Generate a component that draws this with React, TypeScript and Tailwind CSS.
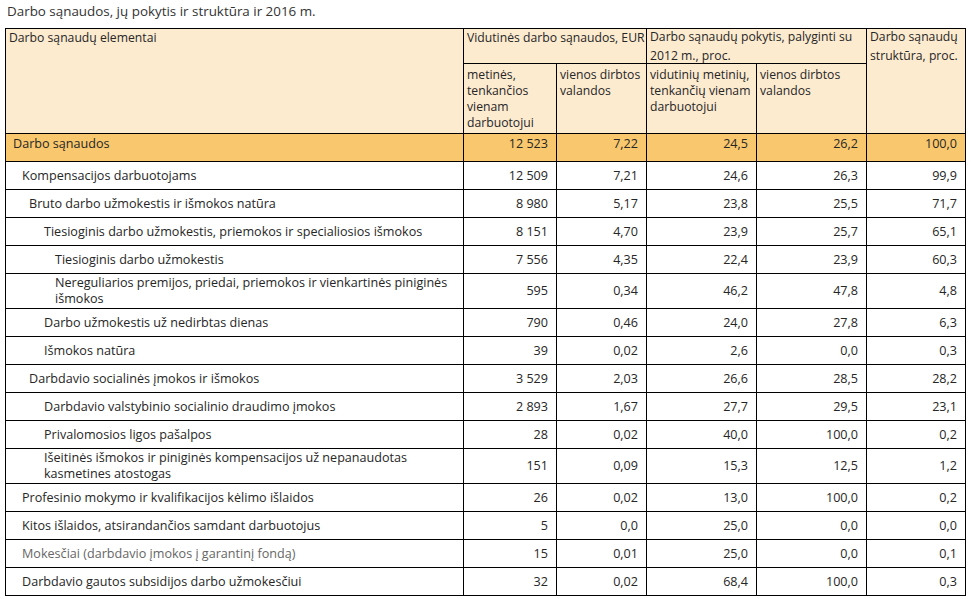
const rows: { label: string[]; indent: number; values: string[]; muted?: boolean }[] = [
  { label: ['Kompensacijos darbuotojams'], indent: 16, values: ['12 509', '7,21', '24,6', '26,3', '99,9'] },
  { label: ['Bruto darbo užmokestis ir išmokos natūra'], indent: 23, values: ['8 980', '5,17', '23,8', '25,5', '71,7'] },
  { label: ['Tiesioginis darbo užmokestis, priemokos ir specialiosios išmokos'], indent: 38, values: ['8 151', '4,70', '23,9', '25,7', '65,1'] },
  { label: ['Tiesioginis darbo užmokestis'], indent: 49, values: ['7 556', '4,35', '22,4', '23,9', '60,3'] },
  { label: ['Nereguliarios premijos, priedai, priemokos ir vienkartinės piniginės', 'išmokos'], indent: 49, values: ['595', '0,34', '46,2', '47,8', '4,8'] },
  { label: ['Darbo užmokestis už nedirbtas dienas'], indent: 38, values: ['790', '0,46', '24,0', '27,8', '6,3'] },
  { label: ['Išmokos natūra'], indent: 38, values: ['39', '0,02', '2,6', '0,0', '0,3'] },
  { label: ['Darbdavio socialinės įmokos ir išmokos'], indent: 23, values: ['3 529', '2,03', '26,6', '28,5', '28,2'] },
  { label: ['Darbdavio valstybinio socialinio draudimo įmokos'], indent: 38, values: ['2 893', '1,67', '27,7', '29,5', '23,1'] },
  { label: ['Privalomosios ligos pašalpos'], indent: 38, values: ['28', '0,02', '40,0', '100,0', '0,2'] },
  { label: ['Išeitinės išmokos ir piniginės kompensacijos už nepanaudotas', 'kasmetines atostogas'], indent: 38, values: ['151', '0,09', '15,3', '12,5', '1,2'] },
  { label: ['Profesinio mokymo ir kvalifikacijos kėlimo išlaidos'], indent: 16, values: ['26', '0,02', '13,0', '100,0', '0,2'] },
  { label: ['Kitos išlaidos, atsirandančios samdant darbuotojus'], indent: 16, values: ['5', '0,0', '25,0', '0,0', '0,0'] },
  { label: ['Mokesčiai (darbdavio įmokos į garantinį fondą)'], indent: 16, values: ['15', '0,01', '25,0', '0,0', '0,1'], muted: true },
  { label: ['Darbdavio gautos subsidijos darbo užmokesčiui'], indent: 16, values: ['32', '0,02', '68,4', '100,0', '0,3'] },
];

const th = 'border border-black align-top text-left font-normal px-[3px] text-[12.2px]';
const td = 'border border-black align-middle text-right pr-[8px]';

export default function App() {
  return (
    <div className="bg-white text-[#262626] text-[12.6px] leading-[16px] pl-[5px] pt-[2px]" style={{ fontFamily: '"Open Sans", "Noto Sans", sans-serif' }}>
      <h1 className="text-[13.4px] leading-[18px] pl-[2px] mb-[8px] text-[#333]">
        Darbo sąnaudos, jų pokytis ir struktūra ir 2016 m.
      </h1>
      <table className="table-fixed border-collapse w-[960px]">
        <colgroup>
          <col className="w-[458px]" />
          <col className="w-[93px]" />
          <col className="w-[90px]" />
          <col className="w-[110px]" />
          <col className="w-[110px]" />
          <col className="w-[99px]" />
        </colgroup>
        <thead>
          <tr className="bg-[#fdebd0] h-[34px]">
            <th rowSpan={2} className={th + ' pt-[1px]'}>Darbo sąnaudų elementai</th>
            <th colSpan={2} className={th + ' whitespace-nowrap pt-[1px]'}>Vidutinės darbo sąnaudos, EUR</th>
            <th colSpan={2} className={th}>
              <div className="leading-[19px] -mt-[2px] -mb-[2px]">
                Darbo sąnaudų pokytis, palyginti su
                <br />
                2012 m., proc.
              </div>
            </th>
            <th rowSpan={2} className={th}>
              <div className="leading-[19px] -mt-[2px]">
                Darbo sąnaudų
                <br />
                struktūra, proc.
              </div>
            </th>
          </tr>
          <tr className="bg-[#fdebd0] h-[70px]">
            <th className={th + ' pt-[3px]'}>metinės, tenkančios vienam darbuotojui</th>
            <th className={th + ' pt-[3px]'}>vienos dirbtos valandos</th>
            <th className={th + ' pt-[3px]'}>vidutinių metinių, tenkančių vienam darbuotojui</th>
            <th className={th + ' pt-[3px]'}>vienos dirbtos valandos</th>
          </tr>
        </thead>
        <tbody>
          <tr className="bg-[#f9c86e] h-[28px]">
            <td className="border border-black align-top text-left pl-[7px] pt-[2px]">Darbo sąnaudos</td>
            {['12 523', '7,22', '24,5', '26,2', '100,0'].map((v, i) => (
              <td key={i} className="border border-black align-top text-right pr-[8px] pt-[2px]">
                {v}
              </td>
            ))}
          </tr>
          {rows.map((r, i) => (
            <tr key={i} className={r.label.length > 1 ? 'h-[35px]' : 'h-[28px]'}>
              <td
                className={'border border-black align-middle text-left ' + (r.muted ? 'text-[#666]' : '')}
                style={{ paddingLeft: r.indent }}
              >
                {r.label.map((l, j) => (
                  <span key={j}>
                    {j > 0 && <br />}
                    {l}
                  </span>
                ))}
              </td>
              {r.values.map((v, j) => (
                <td key={j} className={td}>
                  {v}
                </td>
              ))}
            </tr>
          ))}
        </tbody>
      </table>
    </div>
  );
}
